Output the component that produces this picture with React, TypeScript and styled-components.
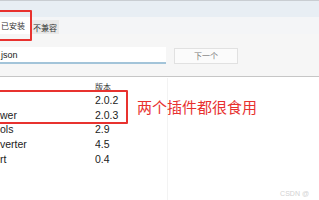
import React from "react";
import styled, { createGlobalStyle } from "styled-components";

const GlobalStyle = createGlobalStyle`
  html, body {
    margin: 0;
    padding: 0;
    background: #ffffff;
    overflow: hidden;
  }
  body {
    font-family: "Noto Sans CJK SC", "Liberation Sans", sans-serif;
  }
`;

const Page = styled.div`
  position: relative;
  width: 319px;
  height: 200px;
  overflow: hidden;
  background: #ffffff;
`;

const TopBand = styled.div`
  height: 16px;
  border-top: 1px solid #c9cdd2;
  background: #e8eef4;
`;

const TabBar = styled.div`
  display: flex;
  align-items: flex-end;
  height: 17px;
  background: #f4f5f7;
`;

const Tab = styled.div<{ $active?: boolean }>`
  display: flex;
  align-items: center;
  height: ${(p) => (p.$active ? 17 : 14)}px;
  padding: 0 ${(p) => (p.$active ? 5 : 2)}px 0 ${(p) => (p.$active ? 1 : 2)}px;
  background: ${(p) => (p.$active ? "#ffffff" : "#e9e9e9")};
  color: #333333;
  font-size: 8px;
  margin-right: 1px;
`;

const Toolbar = styled.div`
  display: flex;
  align-items: center;
  gap: 8px;
  padding: 13px 0 12px 0;
  background: #f6f6f6;
  border-bottom: 1px solid #c6c6c6;
`;

const SearchBox = styled.div`
  display: flex;
  align-items: center;
  width: 165px;
  height: 15px;
  padding-left: 1px;
  background: #ffffff;
  border-bottom: 2px solid #a3c4d9;
  font-family: "Liberation Sans", sans-serif;
  font-size: 9px;
  color: #222222;
  box-sizing: content-box;
`;

const NextButton = styled.div`
  display: flex;
  align-items: center;
  justify-content: center;
  width: 62px;
  height: 14px;
  border: 1px solid #e1e1e1;
  background: #fbfbfb;
  color: #7a7a7a;
  font-size: 8px;
`;

const Table = styled.div`
  display: flex;
  flex-direction: column;
  padding-top: 3px;
  font-family: "Liberation Sans", sans-serif;
`;

const HeaderRow = styled.div`
  display: grid;
  grid-template-columns: 95px 1fr;
  height: 12px;
  margin-bottom: 1px;
  align-items: center;
  font-family: "Noto Sans CJK SC", sans-serif;
  font-size: 8px;
  color: #333333;
`;

const Row = styled.div`
  display: grid;
  grid-template-columns: 95px 1fr;
  height: 14.6px;
  align-items: center;
  font-size: 10.5px;
  color: #222222;
`;

const Cell = styled.span`
  white-space: nowrap;
  overflow: hidden;
`;

const Frame = styled.div<{ $l: number; $t: number; $w: number; $h: number }>`
  position: absolute;
  left: ${(p) => p.$l}px;
  top: ${(p) => p.$t}px;
  width: ${(p) => p.$w}px;
  height: ${(p) => p.$h}px;
  border: 2px solid #e8322f;
  border-radius: 1px;
  box-sizing: border-box;
`;

const Note = styled.div`
  position: absolute;
  left: 137px;
  top: 97px;
  font-family: "Noto Sans CJK SC", sans-serif;
  font-size: 15px;
  line-height: 20px;
  color: #e8312f;
  white-space: nowrap;
`;

const Divider = styled.div`
  position: absolute;
  left: 167px;
  top: 78px;
  width: 1px;
  height: 122px;
  background: #f3f3f3;
`;

const Watermark = styled.div`
  position: absolute;
  right: 10px;
  bottom: 3px;
  font-family: "Liberation Sans", sans-serif;
  font-size: 7px;
  color: #d2d2d2;
`;

const rows = [
  { name: "", version: "2.0.2" },
  { name: "wer", version: "2.0.3" },
  { name: "ols", version: "2.9" },
  { name: "verter", version: "4.5" },
  { name: "rt", version: "0.4" },
];

export default function App() {
  return (
    <Page>
      <GlobalStyle />
      <TopBand />
      <TabBar>
        <Tab $active>已安装</Tab>
        <Tab>不兼容</Tab>
      </TabBar>
      <Toolbar>
        <SearchBox>json</SearchBox>
        <NextButton>下一个</NextButton>
      </Toolbar>
      <Table>
        <HeaderRow>
          <span />
          <span>版本</span>
        </HeaderRow>
        {rows.map((r) => (
          <Row key={r.version}>
            <Cell>{r.name}</Cell>
            <Cell>{r.version}</Cell>
          </Row>
        ))}
      </Table>
      <Divider />
      <Frame $l={-4} $t={10} $w={36} $h={31} />
      <Frame $l={-4} $t={90} $w={132} $h={34} />
      <Note>两个插件都很食用</Note>
      <Watermark>CSDN @</Watermark>
    </Page>
  );
}
